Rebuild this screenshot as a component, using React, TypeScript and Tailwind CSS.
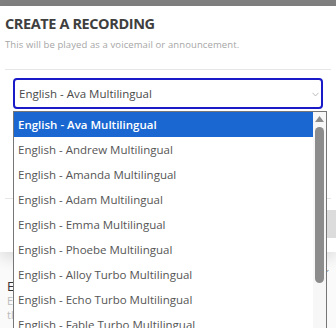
const voices = [
  "English - Ava Multilingual",
  "English - Andrew Multilingual",
  "English - Amanda Multilingual",
  "English - Adam Multilingual",
  "English - Emma Multilingual",
  "English - Phoebe Multilingual",
  "English - Alloy Turbo Multilingual",
  "English - Echo Turbo Multilingual",
  "English - Fable Turbo Multilingual",
];

export default function App() {
  return (
    <div
      className="relative w-[336px] h-[328px] overflow-hidden bg-white"
      style={{ fontFamily: "'Open Sans', 'Liberation Sans', sans-serif" }}
    >
      {/* Backdrop strip above the modal. */}
      <div className="h-[6px] bg-[#808080]" />

      {/* Modal. */}
      <div className="relative z-10 bg-white shadow-[0_6px_14px_rgba(0,0,0,0.12)] h-[246px]">
        <div className="px-[5px] pt-[8px]">
          <h2 className="text-[14.5px] font-bold text-[#3f3f3f] tracking-[-0.4px] leading-[20px]">
            CREATE A RECORDING
          </h2>
          <p className="mt-[5px] text-[9.5px] text-[#a6a6a6] leading-[12px] tracking-[0.1px]">
            This will be played as a voicemail or announcement.
          </p>
        </div>
        <div className="mx-[5px] mt-[18px] border-t border-[#e6e6e6]" />

        {/* Select. */}
        <div className="mx-[13px] mt-[8px] h-[31px] rounded-[4px] border-2 border-[#1a1ac8] flex items-center justify-between pl-[4px] pr-[2px]">
          <span className="text-[11.5px] text-[#4a4a4a]">English - Ava Multilingual</span>
          <svg width="7" height="5" viewBox="0 0 7 5" className="text-[#b5b5b5] mt-[2px]">
            <path d="M0.5 0.8 L3.5 4 L6.5 0.8" fill="none" stroke="currentColor" strokeWidth="0.9" />
          </svg>
        </div>

        <div className="mx-[5px] mt-[89px] border-t border-[#e6e6e6]" />
        <div className="flex justify-end mt-[11px]">
          <div className="w-[12px] h-[28px] rounded-l-[4px] bg-[#dcdcdc]" />
        </div>
      </div>

      {/* Content of the page behind the modal. */}
      <div className="bg-[#fafafa] h-[76px] pt-[26px] pl-[7px] flex flex-col">
        <span className="text-[13px] text-[#333] leading-[16px]">E</span>
        <span className="text-[11px] text-[#bbb] leading-[14px]">E</span>
        <span className="text-[11px] text-[#bbb] leading-[14px]">tl</span>
      </div>
      <div className="absolute right-[5px] top-[262px] text-[9px] text-[#888]">⌄</div>

      {/* Open option list. */}
      <div className="absolute z-20 left-[13px] top-[111px] w-[314px] h-[230px] bg-white border border-[#767676] flex">
        <ul className="flex-1">
          {voices.map((v, i) => (
            <li
              key={v}
              className={
                i === 0
                  ? "h-[25px] flex items-center pl-[4px] text-[11.5px] font-semibold text-white bg-[#1a67d2]"
                  : "h-[25px] flex items-center pl-[4px] text-[11.5px] text-[#555]"
              }
            >
              {v}
            </li>
          ))}
        </ul>
        <div className="w-[13px] bg-[#f7f7f7] flex flex-col items-center pt-[4px]">
          <svg width="9" height="6" viewBox="0 0 9 6">
            <path d="M4.5 0 L9 6 L0 6 Z" fill="#8c8c8c" />
          </svg>
          <div className="mt-[5px] w-[9px] h-[156px] rounded-full bg-[#8c8c8c]" />
        </div>
      </div>
    </div>
  );
}
